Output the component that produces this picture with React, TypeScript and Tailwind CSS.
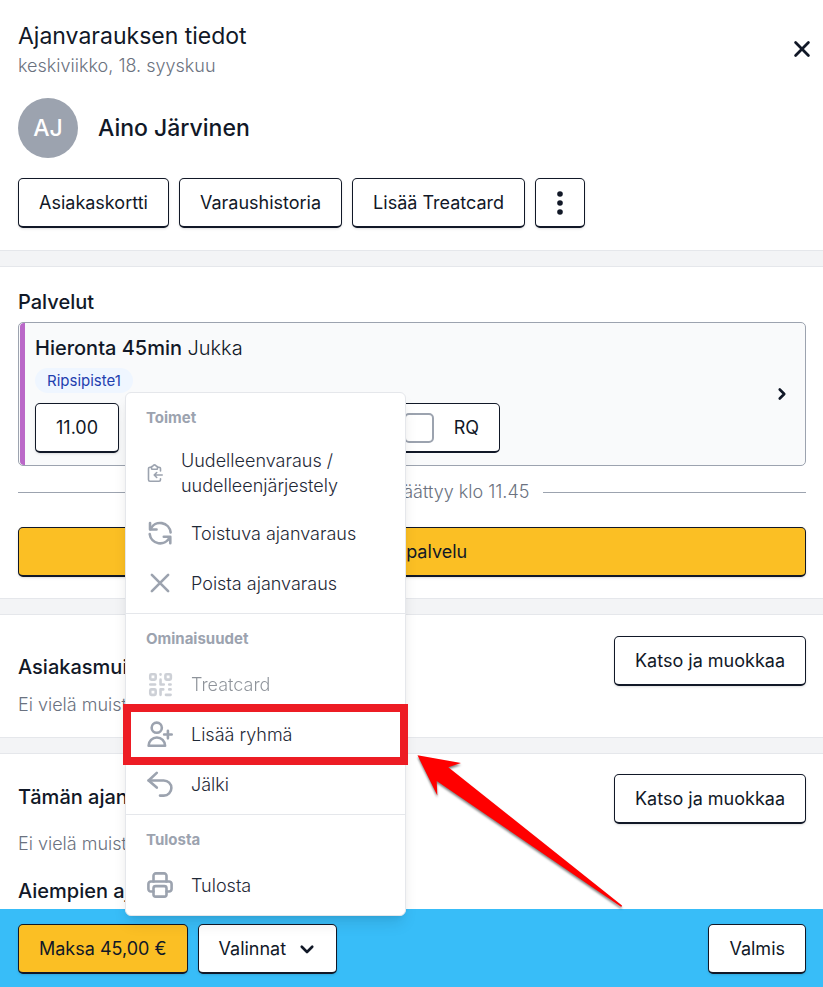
import React from "react";
import clsx from "clsx";

interface ButtonProps {
    children: React.ReactNode;
    className?: string;
    label?: string;
}

const Button: React.FC<ButtonProps> = ({ children, className, label }) => {
    return (
        <button
            type="button"
            aria-label={label}
            className={clsx(
                "flex h-[50px] shrink-0 items-center justify-center whitespace-nowrap rounded-[5px] border border-b-2 border-[#111827] px-5 text-lg font-normal text-[#111827] shadow-sm",
                className ?? "bg-white"
            )}
        >
            {children}
        </button>
    );
};

interface IconProps {
    children: React.ReactNode;
    size?: number;
    className?: string;
}

const Icon: React.FC<IconProps> = ({ children, size = 26, className }) => {
    return (
        <svg
            width={size}
            height={size}
            viewBox="0 0 24 24"
            fill="none"
            stroke="currentColor"
            strokeWidth={2.4}
            strokeLinecap="round"
            strokeLinejoin="round"
            aria-hidden="true"
            className={clsx("shrink-0", className)}
        >
            {children}
        </svg>
    );
};

const RebookIcon = () => (
    <svg
        width="16"
        height="18"
        viewBox="0 0 16 18"
        fill="none"
        stroke="currentColor"
        strokeWidth={1.6}
        strokeLinecap="round"
        strokeLinejoin="round"
        aria-hidden="true"
        className="ml-px shrink-0 text-[#9ca3af]"
    >
        <path d="M4.500 3.200H3A1.500 1.500 0 0 0 1.500 4.700v11A1.500 1.500 0 0 0 3 17.200h9a1.500 1.500 0 0 0 1.500-1.500v-1M10.500 3.200H12a1.500 1.500 0 0 1 1.500 1.500v2.300" />
        <path d="M4.500 2.800 5.900 2A1.700 1.700 0 0 1 9.100 2l1.400.8v1.700a.7.7 0 0 1-.7.700H5.200a.7.7 0 0 1-.7-.7z" />
        <path d="M15.200 11H7.200M9.700 8.500 7.200 11l2.500 2.500" />
    </svg>
);

const RepeatIcon = () => (
    <Icon className="ml-px text-[#9ca3af]">
        <path d="M2.800 2.800v6h6M21.500 21.500v-6h-6" />
        <path d="M3.300 8.500A9.700 9.700 0 0 1 21.800 11.500M20.900 16A9.700 9.700 0 0 1 2.500 13" />
    </Icon>
);

const CrossIcon = () => (
    <Icon className="ml-px text-[#9ca3af]">
        <path d="M4.500 4.500l15 15M19.500 4.500l-15 15" />
    </Icon>
);

const QrIcon = () => (
    <Icon className="ml-px text-[#9ca3af]">
        <rect x="3" y="3" width="5" height="5" rx="1" />
        <rect x="17" y="3" width="5" height="5" rx="1" />
        <rect x="3" y="17" width="5" height="5" rx="1" />
        <path d="M12.500 3v.3M12.500 8v4.500h3M3 12.500h4.500M20.500 12.500h1.300M12.500 22v-5h2.500M20.500 17h1.300M17.500 22h4.300" />
    </Icon>
);

const AddPersonIcon = () => (
    <Icon className="ml-px text-[#9ca3af]">
        <circle cx="9" cy="6.200" r="4.700" />
        <path d="M1.500 22.800a7.600 7.600 0 0 1 15.200 0z" />
        <path d="M19.300 9v7M15.800 12.500h7" />
    </Icon>
);

const UndoIcon = () => (
    <Icon className="ml-px text-[#9ca3af]">
        <path d="M9 1.700 1.500 8.700l7.500 6.600" />
        <path d="M1.500 8.700h14a7 7 0 0 1 0 14H12" />
    </Icon>
);

const PrintIcon = () => (
    <Icon className="ml-px text-[#9ca3af]">
        <path d="M6 18H3.500A2.200 2.200 0 0 1 1.300 15.800V11a2.200 2.200 0 0 1 2.200-2.200h17A2.200 2.200 0 0 1 22.700 11v4.800A2.200 2.200 0 0 1 20.500 18H18" />
        <path d="M6 8.800V3.500A2.200 2.200 0 0 1 8.200 1.300h7.600A2.200 2.200 0 0 1 18 3.500v5.300" />
        <rect x="6" y="13" width="12" height="9.700" rx="2" />
    </Icon>
);

const Divider = () => (
    <div className="h-[17px] border-y border-[#e5e7eb] bg-[#f3f4f6]" />
);

interface MenuItemProps {
    icon: React.ReactNode;
    label: string;
    disabled?: boolean;
    children?: React.ReactNode;
}

const MenuItem: React.FC<MenuItemProps> = ({ icon, label, disabled, children }) => {
    return (
        <li role="none" className="relative">
            <button
                type="button"
                role="menuitem"
                disabled={disabled}
                className={clsx(
                    "flex min-h-[50px] w-full items-center gap-[18px] px-5 py-[10px] text-left text-lg/[25px] font-light text-[#1f2937]",
                    disabled && "opacity-50"
                )}
            >
                {icon}
                <span>{label}</span>
            </button>
            {children}
        </li>
    );
};

interface MenuGroupProps {
    title: string;
    children: React.ReactNode;
}

const MenuGroup: React.FC<MenuGroupProps> = ({ title, children }) => {
    return (
        <div role="group" aria-label={title} className="py-[5px]">
            <div className="px-5 text-[15px]/[40px] font-bold text-[#9ca3af]">{title}</div>
            <ul role="none">{children}</ul>
        </div>
    );
};

const Highlight = () => (
    <>
        <span className="pointer-events-none absolute -inset-x-[3px] -top-[5px] -bottom-[6px] border-8 border-[#ed1c24]" />
        <svg
            width="220"
            height="165"
            viewBox="0 0 220 165"
            aria-hidden="true"
            className="pointer-events-none absolute top-[41px] left-[284px] max-w-none drop-shadow-[0_2px_1px_rgba(0,0,0,0.5)]"
        >
            <path
                d="M7.500 5.300 51 13l-12.700 4.300L212 155.500l-.7 1.500L26.700 31l.6 14.500z"
                fill="#ff0000"
            />
        </svg>
    </>
);

const OptionsMenu = () => {
    return (
        <div
            role="menu"
            className="absolute bottom-[71px] left-[125px] z-10 w-[281px] divide-y divide-[#e5e7eb] rounded-md border border-[#e5e7eb] bg-white shadow-lg"
        >
            <MenuGroup title="Toimet">
                <MenuItem icon={<RebookIcon />} label="Uudelleenvaraus / uudelleenjärjestely" />
                <MenuItem icon={<RepeatIcon />} label="Toistuva ajanvaraus" />
                <MenuItem icon={<CrossIcon />} label="Poista ajanvaraus" />
            </MenuGroup>
            <MenuGroup title="Ominaisuudet">
                <MenuItem icon={<QrIcon />} label="Treatcard" disabled />
                <MenuItem icon={<AddPersonIcon />} label="Lisää ryhmä">
                    <Highlight />
                </MenuItem>
                <MenuItem icon={<UndoIcon />} label="Jälki" />
            </MenuGroup>
            <MenuGroup title="Tulosta">
                <MenuItem icon={<PrintIcon />} label="Tulosta" />
            </MenuGroup>
        </div>
    );
};

const Header = () => {
    return (
        <header className="px-[18px] pt-[22px] pb-[22px]">
            <div className="flex items-start justify-between">
                <div>
                    <h1 className="text-[23px]/[28px] font-normal">Ajanvarauksen tiedot</h1>
                    <p className="mt-[3px] text-lg/[26px] font-light text-[#6b7280]">
                        keskiviikko, 18. syyskuu
                    </p>
                </div>
                <button type="button" aria-label="Sulje" className="-mr-2 pt-4">
                    <Icon size={22}>
                        <path d="M5 5l14 14M19 5L5 19" strokeWidth={3} />
                    </Icon>
                </button>
            </div>
            <div className="mt-[19px] flex items-center gap-5">
                <div className="flex size-[60px] items-center justify-center rounded-full bg-[#9ca3af] text-[23px] font-medium text-white">
                    AJ
                </div>
                <h2 className="text-[23px] font-medium">Aino Järvinen</h2>
            </div>
            <div className="mt-5 flex gap-[10px]">
                <Button>Asiakaskortti</Button>
                <Button>Varaushistoria</Button>
                <Button>Lisää Treatcard</Button>
                <Button label="Lisää toimintoja" className="w-[50px] bg-white px-0">
                    <svg width="8" height="26" viewBox="0 0 8 26" fill="currentColor" aria-hidden="true">
                        <circle cx="4" cy="4" r="2.800" />
                        <circle cx="4" cy="13" r="2.800" />
                        <circle cx="4" cy="22" r="2.800" />
                    </svg>
                </Button>
            </div>
        </header>
    );
};

const Services = () => {
    return (
        <section className="pt-[21px] pr-[17px] pb-[21px] pl-[18px]">
            <h2 className="text-xl/[28px] font-medium">Palvelut</h2>
            <div className="mt-[6px] flex items-center overflow-hidden rounded-[5px] border border-[#9ca3af] bg-[#f9fafb] pl-px">
                <div className="w-[5px] self-stretch rounded-l bg-[#ba68c8]" />
                <div className="flex-1 pt-[11px] pb-3 pl-[10px]">
                    <h3 className="text-xl/[28px] font-medium">
                        Hieronta 45min <span className="font-light">Jukka</span>
                    </h3>
                    <span className="mt-[6px] block w-fit rounded-full bg-[#eff6ff] px-3 text-[15px]/[25px] font-normal text-[#1e40af]">
                        Ripsipiste1
                    </span>
                    <div className="mt-[10px] flex gap-[10px]">
                        <Button>11.00</Button>
                        <label className="flex h-[50px] w-[371px] items-center justify-end gap-5 rounded-[5px] border border-b-2 border-[#111827] bg-white px-5 text-lg font-normal">
                            <input
                                type="checkbox"
                                className="size-[30px] appearance-none rounded-[5px] border-2 border-[#9ca3af] bg-white"
                            />
                            RQ
                        </label>
                    </div>
                </div>
                <Icon size={18} className="mr-[14px]">
                    <path d="M9 6l6 6-6 6" strokeWidth={3.5} />
                </Icon>
            </div>
            <div className="mt-[13px] flex items-center gap-[14px] text-lg/[26px] font-light text-[#6b7280]">
                <div className="h-px flex-1 bg-[#9ca3af]" />
                <span>Ajanvaraus päättyy klo 11.45</span>
                <div className="h-px flex-1 bg-[#9ca3af]" />
            </div>
            <Button className="mt-[22px] w-full bg-[#fbbf24]">Lisää palvelu</Button>
        </section>
    );
};

const CustomerNotes = () => {
    return (
        <section className="flex items-start justify-between pt-[21px] pr-[17px] pb-[19px] pl-[18px]">
            <div className="pt-[17px]">
                <h2 className="text-xl/[28px] font-medium">Asiakasmuistiinpanot</h2>
                <p className="mt-[11px] text-lg/[26px] font-light text-[#6b7280]">
                    Ei vielä muistiinpanoja
                </p>
            </div>
            <Button>Katso ja muokkaa</Button>
        </section>
    );
};

const AppointmentNotes = () => {
    return (
        <section className="flex items-start justify-between pt-5 pr-[17px] pl-[18px]">
            <div className="pt-[9px]">
                <h2 className="text-xl/[28px] font-medium">Tämän ajanvarauksen muistiinpanot</h2>
                <p className="mt-5 text-lg/[26px] font-light text-[#6b7280]">
                    Ei vielä muistiinpanoja
                </p>
                <h2 className="mt-5 text-xl/[28px] font-medium">Aiempien ajanvarausten tiedot</h2>
            </div>
            <Button>Katso ja muokkaa</Button>
        </section>
    );
};

const Footer = () => {
    return (
        <footer className="sticky bottom-0 flex gap-[10px] bg-[#38bdf8] pt-[15px] pr-[17px] pb-[13px] pl-[18px]">
            <Button className="bg-[#fbbf24]">Maksa 45,00 €</Button>
            <Button className="gap-3 bg-white">
                Valinnat
                <Icon size={18}>
                    <path d="M5 9l7 7 7-7" strokeWidth={3.5} />
                </Icon>
            </Button>
            <Button className="ml-auto bg-white">Valmis</Button>
            <OptionsMenu />
        </footer>
    );
};

const App = () => {
    return (
        <div className="flex min-h-screen flex-col bg-white font-['Inter',sans-serif] text-[#111827]">
            <main className="flex-1">
                <Header />
                <Divider />
                <Services />
                <Divider />
                <CustomerNotes />
                <Divider />
                <AppointmentNotes />
            </main>
            <Footer />
        </div>
    );
};

export default App;
